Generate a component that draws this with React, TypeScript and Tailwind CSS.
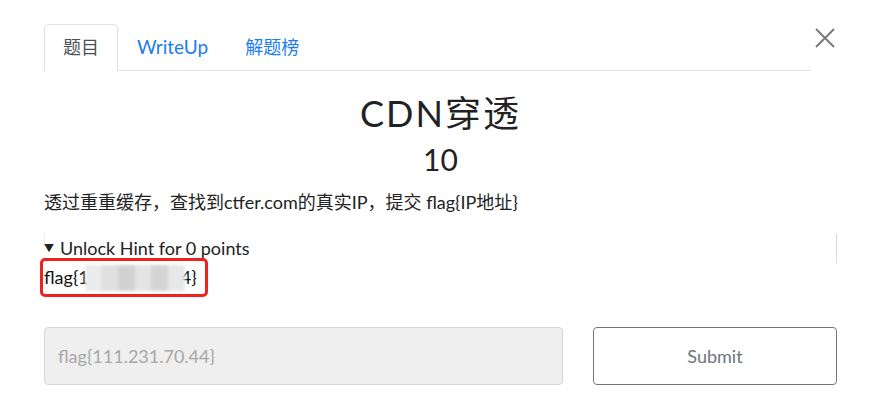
import React from "react";

export default function App() {
  const font = { fontFamily: "Lato, 'Noto Sans CJK SC', sans-serif" };
  return (
    <div className="w-[881px] h-[404px] bg-white text-[#212529] relative" style={font}>
      {/* close */}
      <svg className="absolute left-[815px] top-[28px]" width="20" height="20" viewBox="0 0 20 20">
        <path d="M1 1 L19 19 M19 1 L1 19" stroke="#7a7a7a" strokeWidth="2" />
      </svg>
      <div className="pl-[44px] pt-[24px] w-[837px]">
        {/* tabs */}
        <div className="flex w-[767px] border-b border-[#dee2e6] h-[47px] items-end">
          <div className="h-[47px] px-[18px] flex items-center border border-b-0 border-[#dee2e6] rounded-t-[5px] bg-white text-[#495057] text-[18px] -mb-px pb-px">
            题目
          </div>
          <div className="h-[46px] pl-[19px] pr-[18px] flex items-center text-[#1a7cf0] text-[19px]">WriteUp</div>
          <div className="h-[46px] px-[19px] flex items-center text-[#1a7cf0] text-[18px]">解题榜</div>
        </div>
        {/* title */}
        <div className="text-center text-[36px] leading-[44px] mt-[20px] tracking-[2px] text-[#222]">CDN穿透</div>
        <div className="text-center text-[30px] leading-[40px] mt-[4px] text-[#222]">10</div>
        <div className="text-[18px] leading-[27px] mt-[10px] text-[#222]">
          透过重重缓存，查找到ctfer.com的真实IP，提交 flag{"{"}IP地址{"}"}
        </div>
        <div className="mt-[18px] flex justify-between">
          <div className="border-l border-[#ececec] h-[12px]" />
          <div className="border-r border-[#d8d8d8] h-[29px]" />
        </div>
        <div className="-mt-[27px]">
          <div className="text-[18px] leading-[24px] text-[#222] flex items-center">
            <span className="text-[10px] mr-[6px]">▼</span>Unlock Hint for 0 points
          </div>
          <div className="ml-[-4px] mt-[-2px] inline-flex items-center h-[39px] w-[168px] border-[3px] border-[#f0221e] rounded-[5px] pl-[1px] text-[18px] text-[#111]">
            flag{"{"}1
            <span className="inline-flex h-[26px] w-[100px] mx-[-4px] overflow-hidden blur-[1.5px]">
              <span className="w-[16px] bg-[#ececec]" />
              <span className="w-[17px] bg-[#e0e0e0]" />
              <span className="w-[17px] bg-[#d2d2d2]" />
              <span className="w-[16px] bg-[#e4e4e4]" />
              <span className="w-[17px] bg-[#d4d4d4]" />
              <span className="w-[17px] bg-[#e8e8e8]" />
            </span>
            4{"}"}
          </div>
        </div>
        <div className="mt-[30px] flex items-center">
          <div className="w-[519px] h-[58px] bg-[#efefef] border border-[#d6d6d6] rounded-[4px] flex items-center pl-[13px] text-[18px] text-[#a8a8a8]">
            flag{"{"}111.231.70.44{"}"}
          </div>
          <div className="ml-[30px] w-[244px] h-[58px] border border-[#6c757d] rounded-[4px] flex items-center justify-center text-[18px] text-[#6c757d]">
            Submit
          </div>
        </div>
      </div>
    </div>
  );
}
